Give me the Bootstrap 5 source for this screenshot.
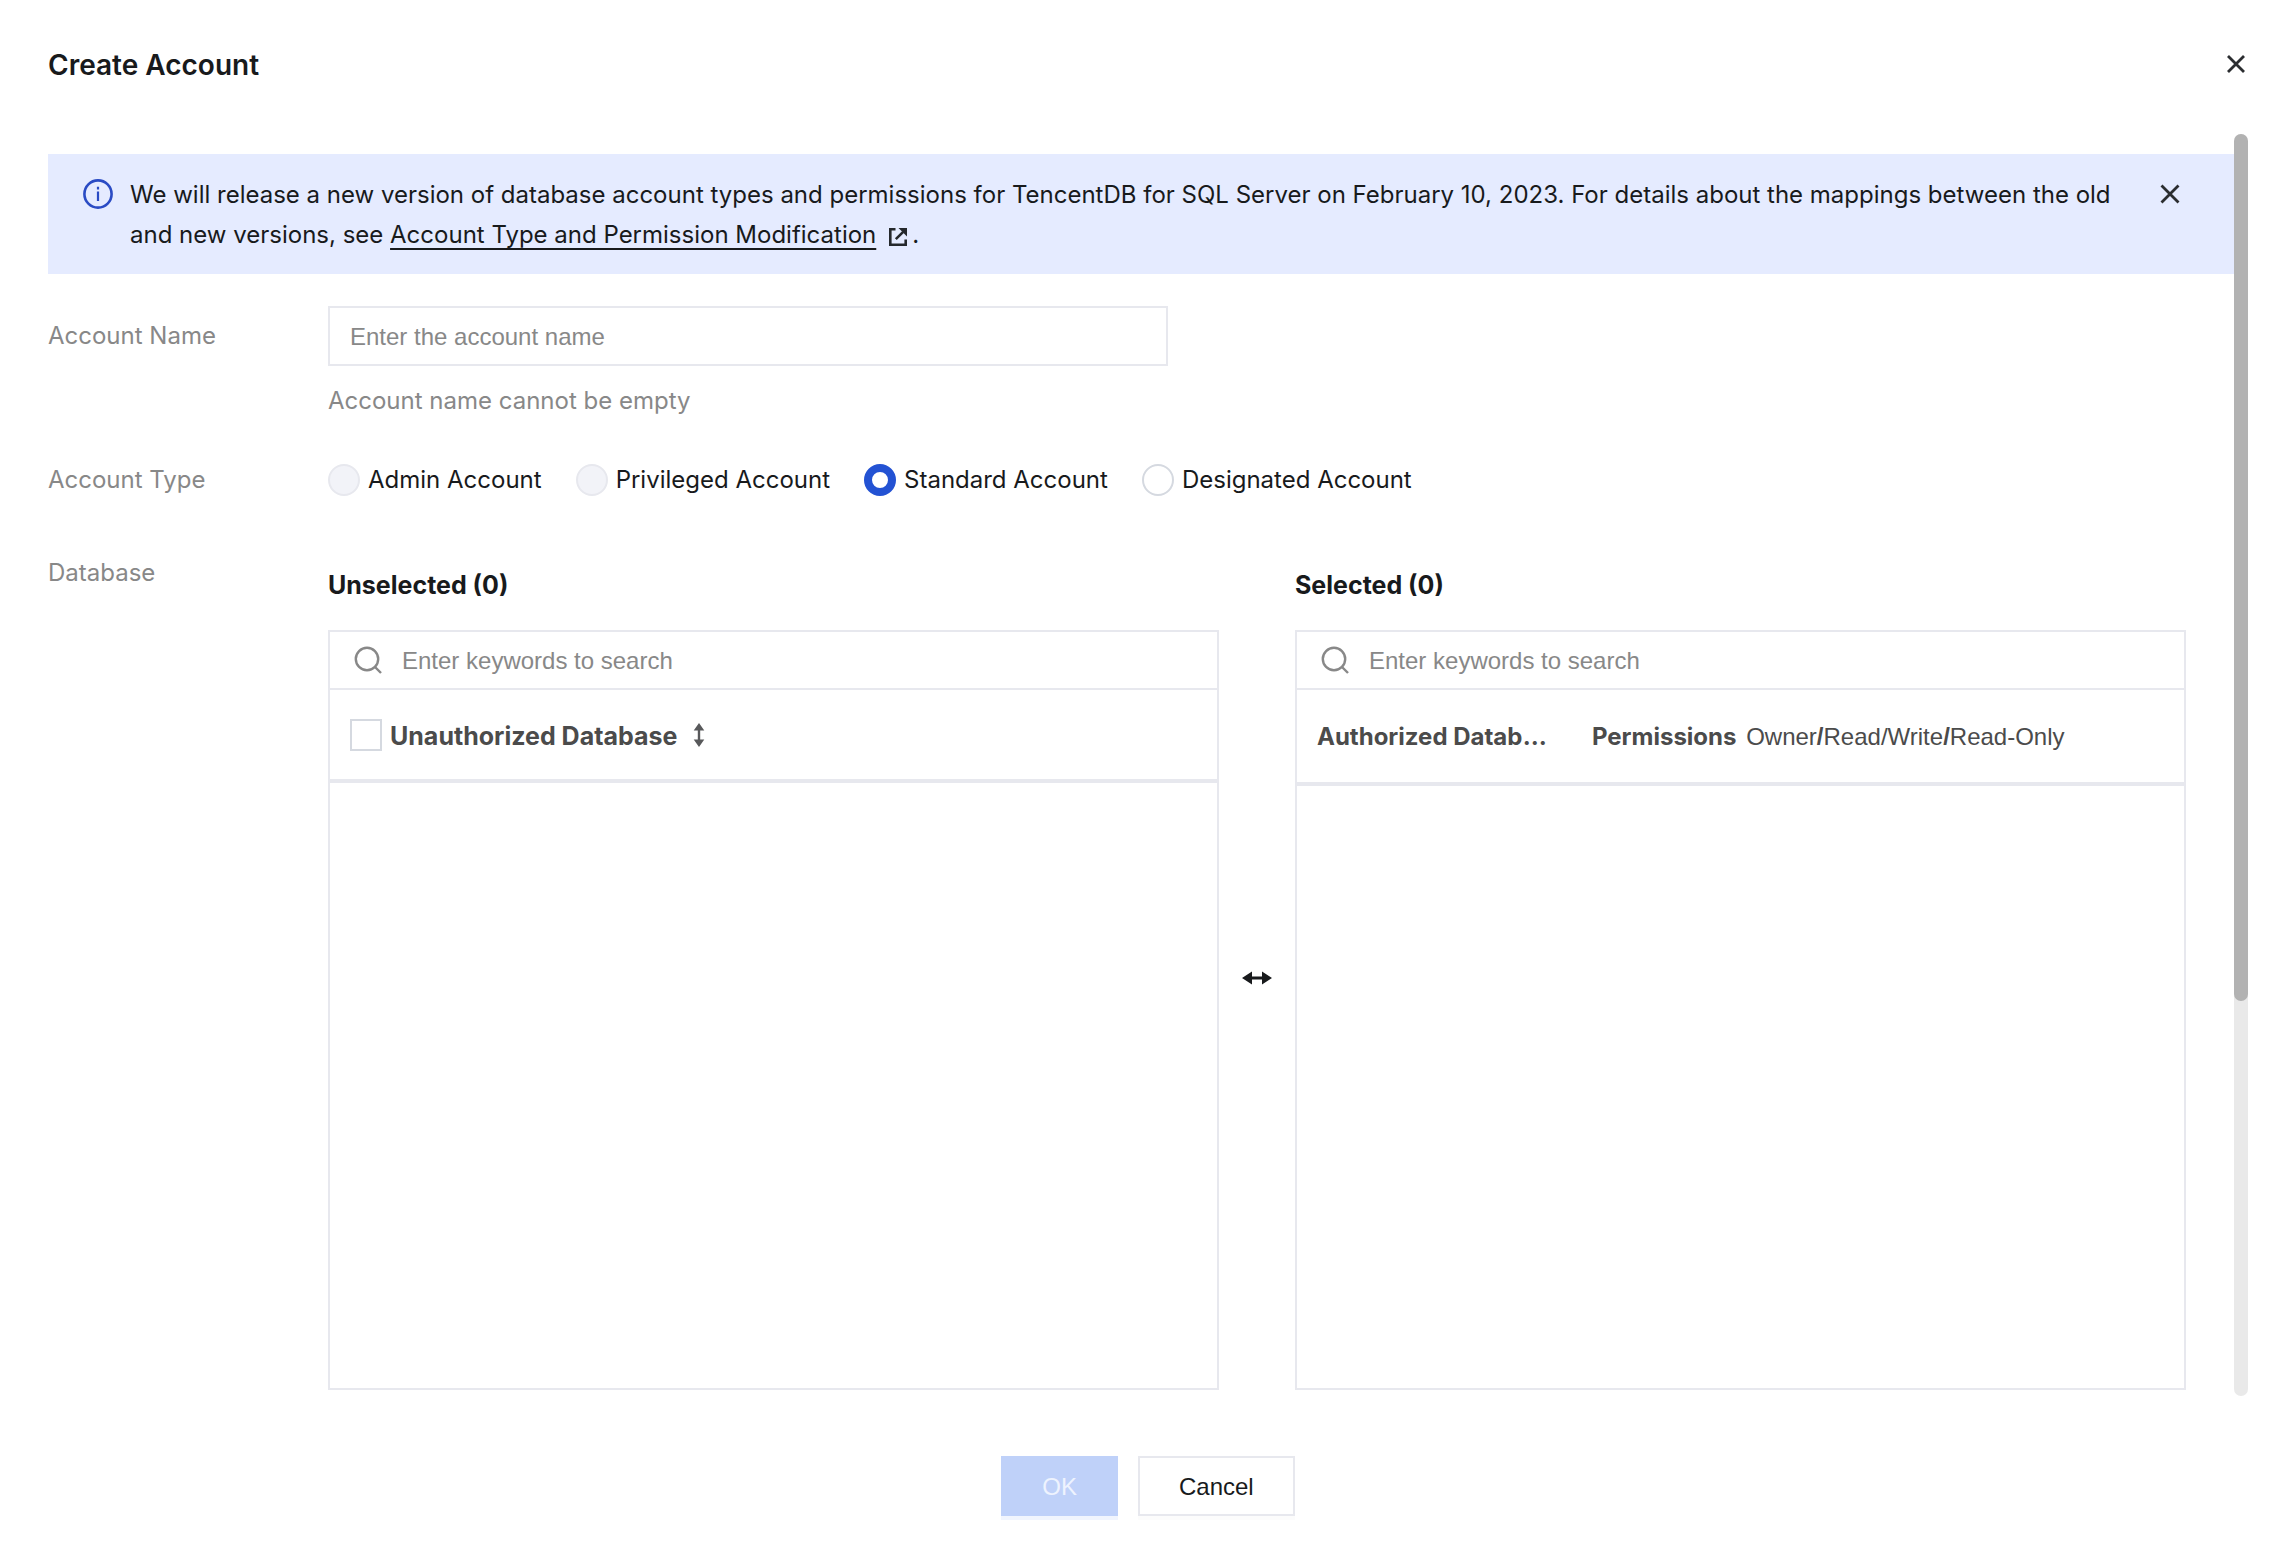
<!DOCTYPE html>
<html lang="en">
<head>
<meta charset="utf-8">
<meta name="viewport" content="width=device-width, initial-scale=1">
<title>Create Account</title>
<link href="https://cdn.jsdelivr.net/npm/bootstrap@5.3.0/dist/css/bootstrap.min.css" rel="stylesheet">
<style>
  :root {
    --line: #e7e8ee;
    --ink: #181a1c;
    --muted-ink: #888;
    --head-ink: #4b4b4b;
    --ui: Inter, "Noto Sans", sans-serif;
    --field: "Liberation Sans", Arial, sans-serif;
  }
  body { font-family: var(--ui); font-size: 24px; line-height: 40px; color: var(--ink); background: #fff; }
  .dialog-head { padding: 41px 42px 0 48px; height: 134px; }
  .dialog-title { font-size: 28px; line-height: 48px; font-weight: 600; }
  .icon-btn { width: 24px; height: 24px; color: #2b2d30; }
  .icon-btn svg, .notice-icon, .sort-btn svg { display: block; }
  .dialog-main { padding: 0 42px 0 48px; }
  .dialog-content { padding: 20px 0 6px; }
  .notice { background: #e5ebff; padding: 21px 52px 19px 35px; margin-bottom: 32px; }
  .notice-icon { width: 30px; height: 30px; margin: 4px 17px 6px 0; }
  .notice-text { padding-right: 32px; }
  .notice .icon-btn { margin-top: 7px; }
  .notice a { color: inherit; text-decoration: underline; text-decoration-thickness: 2px; text-underline-offset: 5px; text-decoration-skip-ink: none; }
  .ext-icon { width: 20px; height: 20px; margin: 0 4px 0 12px; vertical-align: -4px; }
  .field-label { width: 280px; color: var(--muted-ink); font-weight: 400; }
  .name-label { padding-top: 10px; }
  .name-box { width: 840px; max-width: 100%; }
  .name-box .form-control { height: 60px; padding: 2px 20px 0; }
  .form-control, .form-control:focus { border: 2px solid var(--line); border-radius: 0; font: 24px/40px var(--field); color: var(--ink); box-shadow: none; }
  .form-control::placeholder { color: var(--muted-ink); opacity: 1; }
  .hint { color: var(--muted-ink); margin-top: 15px; }
  .type-row { margin-top: 39px; }
  .type-list { gap: 34px; }
  .form-check-input.type-radio, .form-check-input.pick-box { width: 32px; height: 32px; margin: 0; border: 2px solid #d5d9e0; flex: none; }
  .form-check-input.pick-box { border-radius: 0; }
  .form-check-input.type-radio:disabled { background-color: #f2f3f8; border-color: var(--line); opacity: 1; }
  .form-check-input.type-radio:disabled ~ .form-check-label { opacity: 1; }
  .form-check-input.type-radio:checked { background: #fff; border: 8px solid #2352d3; }
  .database-row { margin-top: 49px; }
  .transfer { padding-right: 48px; }
  .panel-title { font-size: 25px; line-height: 40px; font-weight: 700; margin: 0 0 25px; }
  .panel-box { border: 2px solid var(--line); height: 760px; }
  .search-row { height: 58px; padding: 0 20px 0 24px; border-bottom: 2px solid var(--line); }
  .search-row .form-control { border: 0; padding: 2px 0 0; height: 56px; margin-left: 20px; }
  .search-row svg { width: 28px; height: 28px; flex: none; }
  .db-table { table-layout: fixed; margin: 0; }
  .db-table > thead > tr > th { padding: 25px 20px 23px; border-bottom: 4px solid var(--line); color: var(--head-ink); font-weight: 700; line-height: 44px; background: #fff; }
  .db-table.unauthorized > thead > tr > th { padding: 24px 20px; line-height: 41px; font-size: 25px; }
  .db-table.unauthorized label { padding-top: 4px; line-height: 37px; }
  .col-name { width: 31%; }
  .roles { font-family: var(--field); font-weight: 400; margin-left: 4px; }
  .sort-btn { margin-left: 16px; color: #58595b; }
  .swap { width: 76px; }
  .scroll-track { width: 14px; border-radius: 7px; background: #e9e9e9; }
  .scroll-thumb { height: 68.7%; border-radius: 7px; background: #b2b2b2; }
  .dialog-foot { padding: 60px 42px 40px 48px; gap: 20px; }
  .foot-btn { height: 60px; padding: 2px 39px 0; border-radius: 0; font: 24px/40px var(--field); border: 2px solid var(--line); background: #fff; color: var(--ink); box-shadow: 0 4px 0 #fcfcfc; }
  .foot-btn:disabled { background: #bfd1f9; border-color: #bfd1f9; color: #eef3fe; opacity: 1; box-shadow: 0 4px 0 #f1f5fe; }
</style>
</head>
<body>
<header class="dialog-head d-flex justify-content-between align-items-start">
  <h1 class="dialog-title mb-0">Create Account</h1>
  <button type="button" class="icon-btn btn p-0 border-0 mt-2 pt-1 pb-1" aria-label="Close dialog">
    <svg width="24" height="24" viewBox="0 0 24 24" fill="none" stroke="currentColor" stroke-width="2.8"><path d="M4 3l16 16M20 3L4 19"/></svg>
  </button>
</header>

<main class="dialog-main d-flex align-items-stretch">
  <form class="dialog-content flex-grow-1" id="account-form">
    <div class="notice d-flex align-items-start" role="alert">
      <svg class="notice-icon flex-shrink-0" viewBox="0 0 30 30" fill="none" stroke="#2a4bc4" stroke-width="2.6"><circle cx="15" cy="15" r="13.6"/><path d="M15 12.5v9.5M15 7.8v2.6" stroke-width="2.2"/></svg>
      <div class="notice-text flex-grow-1">We will release a new version of database account types and permissions for TencentDB for SQL Server on February 10, 2023. For details about the mappings between the old and new versions, see <a href="#">Account Type and Permission Modification</a><svg class="ext-icon" viewBox="0 0 20 20" fill="none" stroke="#25282c" stroke-width="2.6"><path d="M7.5 2.3H2.3v15.4h15.4v-5.2M7.8 12.2l7.4-7.4"/><path d="M10.5 1h8.5v8.5z" fill="#25282c" stroke="none"/></svg>.</div>
      <button type="button" class="icon-btn btn p-0 border-0 flex-shrink-0" aria-label="Dismiss notice">
        <svg width="24" height="24" viewBox="0 0 24 24" fill="none" stroke="currentColor" stroke-width="2.8"><path d="M3.5 3.5l17 17M20.5 3.5l-17 17"/></svg>
      </button>
    </div>

    <div class="d-flex">
      <label class="field-label name-label flex-shrink-0" for="account-name">Account Name</label>
      <div class="name-box">
        <input type="text" class="form-control" id="account-name" placeholder="Enter the account name">
        <div class="hint">Account name cannot be empty</div>
      </div>
    </div>

    <div class="type-row d-flex align-items-center" role="radiogroup" aria-labelledby="type-label">
      <span class="field-label flex-shrink-0" id="type-label">Account Type</span>
      <div class="type-list d-flex flex-wrap">
        <div class="d-flex align-items-center gap-2"><input class="form-check-input type-radio" type="radio" name="type" id="t-admin" disabled><label class="form-check-label" for="t-admin">Admin Account</label></div>
        <div class="d-flex align-items-center gap-2"><input class="form-check-input type-radio" type="radio" name="type" id="t-priv" disabled><label class="form-check-label" for="t-priv">Privileged Account</label></div>
        <div class="d-flex align-items-center gap-2"><input class="form-check-input type-radio" type="radio" name="type" id="t-std" checked><label class="form-check-label" for="t-std">Standard Account</label></div>
        <div class="d-flex align-items-center gap-2"><input class="form-check-input type-radio" type="radio" name="type" id="t-des"><label class="form-check-label" for="t-des">Designated Account</label></div>
      </div>
    </div>

    <div class="database-row d-flex">
      <span class="field-label flex-shrink-0 pt-1">Database</span>
      <div class="transfer d-flex flex-grow-1 pt-3">
        <section class="flex-fill w-50">
          <h2 class="panel-title">Unselected (0)</h2>
          <div class="panel-box">
            <div class="search-row d-flex align-items-center">
              <svg viewBox="0 0 28 28" fill="none" stroke="#888" stroke-width="2.4"><circle cx="13" cy="13" r="11.2"/><path d="M20.5 20.5l6.5 6.5"/></svg>
              <input type="text" class="form-control" placeholder="Enter keywords to search" aria-label="Search unselected databases">
            </div>
            <table class="table db-table unauthorized">
              <thead><tr><th scope="col"><div class="d-flex align-items-center">
                <input class="form-check-input pick-box me-2" type="checkbox" id="pick-all">
                <label for="pick-all">Unauthorized Database</label>
                <button type="button" class="sort-btn btn p-0 border-0" aria-label="Sort">
                  <svg width="12" height="24" viewBox="0 0 12 24" fill="currentColor"><path d="M6 0l5.3 7.5H7.2v9h4.1L6 24 .7 16.5h4.1v-9H.7z"/></svg>
                </button>
              </div></th></tr></thead>
            </table>
          </div>
        </section>
        <div class="swap d-flex align-items-center justify-content-center flex-shrink-0">
          <svg width="30" height="14" viewBox="0 0 30 14" fill="#181a1c"><path d="M0 7l10-6.5v5h10v-5L30 7l-10 6.5v-5H10v5z"/></svg>
        </div>
        <section class="flex-fill w-50">
          <h2 class="panel-title">Selected (0)</h2>
          <div class="panel-box">
            <div class="search-row d-flex align-items-center">
              <svg viewBox="0 0 28 28" fill="none" stroke="#888" stroke-width="2.4"><circle cx="13" cy="13" r="11.2"/><path d="M20.5 20.5l6.5 6.5"/></svg>
              <input type="text" class="form-control" placeholder="Enter keywords to search" aria-label="Search selected databases">
            </div>
            <table class="table db-table">
              <thead><tr>
                <th scope="col" class="col-name text-truncate">Authorized Database</th>
                <th scope="col" class="text-truncate">Permissions <span class="roles">Owner<b>/</b>Read/Write<b>/</b>Read-Only</span></th>
              </tr></thead>
            </table>
          </div>
        </section>
      </div>
    </div>
  </form>
  <div class="scroll-track flex-shrink-0" aria-hidden="true"><div class="scroll-thumb"></div></div>
</main>

<footer class="dialog-foot d-flex justify-content-center">
  <button type="submit" form="account-form" class="foot-btn btn" disabled>OK</button>
  <button type="button" class="foot-btn btn">Cancel</button>
</footer>
<script src="https://cdn.jsdelivr.net/npm/bootstrap@5.3.0/dist/js/bootstrap.bundle.min.js"></script>
</body>
</html>
